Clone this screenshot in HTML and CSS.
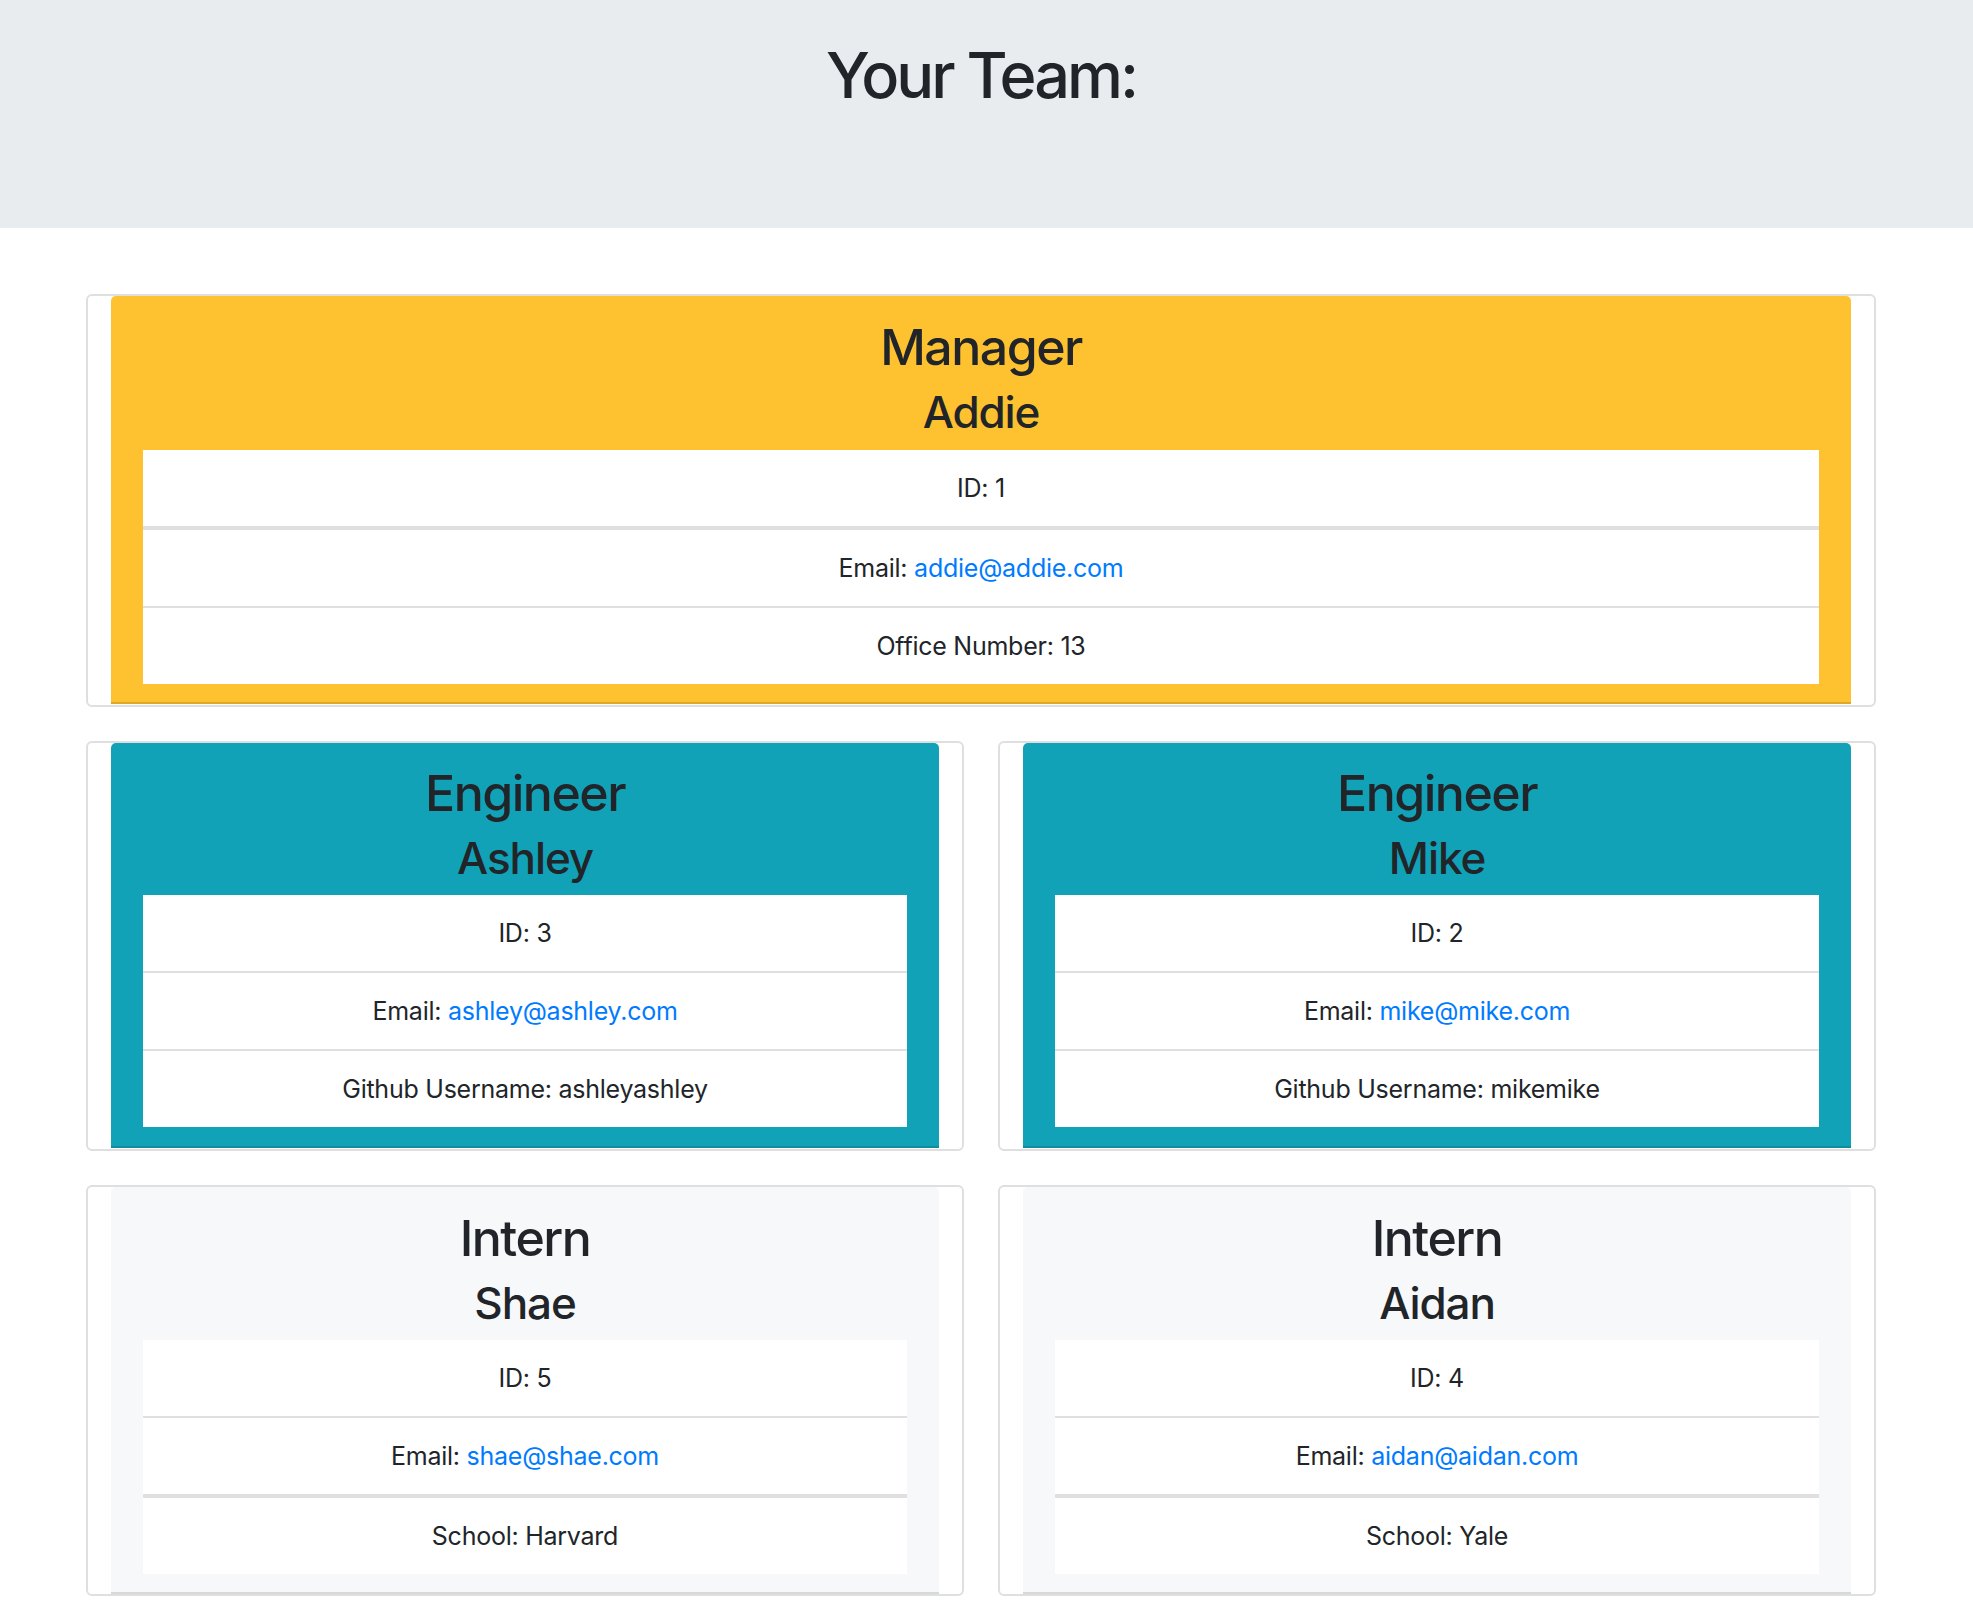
FILE: index.html
```html
<!DOCTYPE html>
<html lang="en">
<head>
<meta charset="utf-8">
<title>My Team</title>
<link rel="stylesheet" href="styles.css">
</head>
<body>
<header class="jumbo">
  <div class="wrap">
    <h1 class="title">Your Team:</h1>
  </div>
</header>
<main class="wrap team">
  <div class="row">
    <div class="card">
      <div class="panel manager">
        <h2 class="role">Manager</h2>
        <h3 class="name">Addie</h3>
        <ul class="facts">
          <li class="fact thick">ID: 1</li>
          <li class="fact">Email: <a href="mailto:addie@addie.com">addie@addie.com</a></li>
          <li class="fact">Office Number: 13</li>
        </ul>
      </div>
    </div>
  </div>
  <div class="row two">
    <div class="card">
      <div class="panel engineer">
        <h2 class="role">Engineer</h2>
        <h3 class="name">Ashley</h3>
        <ul class="facts">
          <li class="fact">ID: 3</li>
          <li class="fact">Email: <a href="mailto:ashley@ashley.com">ashley@ashley.com</a></li>
          <li class="fact">Github Username: ashleyashley</li>
        </ul>
      </div>
    </div>
    <div class="card">
      <div class="panel engineer">
        <h2 class="role">Engineer</h2>
        <h3 class="name">Mike</h3>
        <ul class="facts">
          <li class="fact">ID: 2</li>
          <li class="fact">Email: <a href="mailto:mike@mike.com">mike@mike.com</a></li>
          <li class="fact">Github Username: mikemike</li>
        </ul>
      </div>
    </div>
  </div>
  <div class="row two">
    <div class="card card-last">
      <div class="panel intern">
        <h2 class="role">Intern</h2>
        <h3 class="name">Shae</h3>
        <ul class="facts">
          <li class="fact">ID: 5</li>
          <li class="fact thick">Email: <a href="mailto:shae@shae.com">shae@shae.com</a></li>
          <li class="fact">School: Harvard</li>
        </ul>
      </div>
    </div>
    <div class="card card-last">
      <div class="panel intern">
        <h2 class="role">Intern</h2>
        <h3 class="name">Aidan</h3>
        <ul class="facts">
          <li class="fact">ID: 4</li>
          <li class="fact thick">Email: <a href="mailto:aidan@aidan.com">aidan@aidan.com</a></li>
          <li class="fact">School: Yale</li>
        </ul>
      </div>
    </div>
  </div>
</main>
</body>
</html>
```
FILE: styles.css
```css
* { box-sizing: border-box; }

body {
  margin: 0;
  font-family: Inter, "Liberation Sans", Arial, sans-serif;
  color: #212529;
  background: #ffffff;
}

.wrap {
  padding: 0 97px 0 86px;
}

.jumbo {
  background: #e9ecef;
  height: 228px;
  padding-top: 37px;
}

.title {
  margin: 0;
  text-align: center;
  font-size: 63px;
  line-height: 76px;
  font-weight: 500;
  letter-spacing: -3px;
}

.team {
  padding-top: 66px;
  padding-bottom: 40px;
  display: flex;
  flex-direction: column;
  gap: 34px;
}

.row {
  display: flex;
  gap: 34px;
}

.card {
  flex: 1 1 0;
  border: 2px solid #dfdfdf;
  border-radius: 6px;
  padding: 0 23px 1px;
}

.card-last { padding-bottom: 0; }

.panel {
  border-radius: 5px 5px 0 0;
  padding: 21px 32px 18px;
  border-bottom: 2px solid rgba(0, 0, 0, 0.13);
  text-align: center;
}

.manager { background: #fec12f; }
.engineer { background: #12a2b7; padding-top: 20px; padding-bottom: 19px; }
.intern { background: #f7f8fa; }

.role {
  margin: 0;
  font-size: 50px;
  line-height: 60px;
  font-weight: 500;
  letter-spacing: -1.5px;
}

.name {
  margin: 9px 0 0;
  font-size: 44px;
  line-height: 52px;
  font-weight: 500;
  letter-spacing: -1.1px;
}

.facts {
  list-style: none;
  margin: 12px 0 0;
  padding: 0;
  background: #ffffff;
}

.engineer .facts { margin-top: 11px; }
.intern .facts { margin-top: 11px; }

.fact {
  padding: 19px 20px;
  font-size: 25px;
  line-height: 38px;
  letter-spacing: -0.25px;
  border-bottom: 2px solid #dfdfdf;
}

.fact.thick { border-bottom-width: 4px; }
.fact:last-child { border-bottom: 0; }

.fact a {
  color: #007bff;
  text-decoration: none;
}
```
